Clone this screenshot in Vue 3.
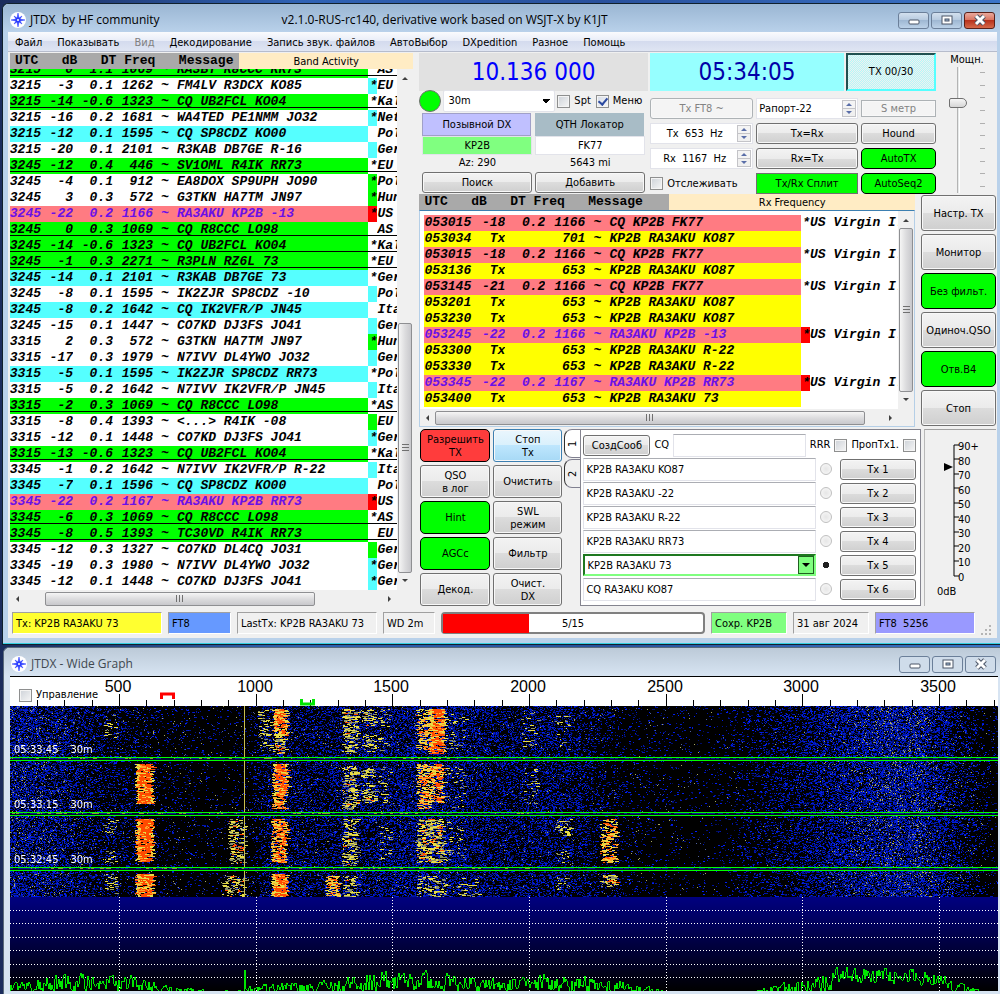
<script setup>
import { computed, onMounted, ref } from 'vue'

const menu = [
  { text: 'Файл' },
  { text: 'Показывать' },
  { text: 'Вид', off: true },
  { text: 'Декодирование' },
  { text: 'Запись звук. файлов' },
  { text: 'АвтоВыбор' },
  { text: 'DXpedition' },
  { text: 'Разное' },
  { text: 'Помощь' },
]

// kind: g = green, c = cyan, r = red, w = white; mark is the colour of the flag cell
const row = (utc, db, dt, freq, msg, kind, star, mark, dxcc) => ({ utc, db, dt, freq, msg, kind, star, mark, dxcc })
const band = [
  row('3215', '0', '1.1', '1069', 'RA3BY R8CCC RR73', 'g', '', '', 'AS'),
  row('3215', '-3', '0.1', '1262', 'FM4LV R3DCX KO85', 'w', '*', 'c', 'EU'),
  row('3215', '-14', '-0.6', '1323', 'CQ UB2FCL KO04', 'g', '*', '', 'Kal'),
  row('3215', '-16', '0.2', '1681', 'WA4TED PE1NMM JO32', 'w', '*', 'c', 'Net'),
  row('3215', '-12', '0.1', '1595', 'CQ SP8CDZ KO00', 'c', '', '', 'Pol'),
  row('3215', '-20', '0.1', '2101', 'R3KAB DB7GE R-16', 'w', '', 'c', 'Ger'),
  row('3245', '-12', '0.4', '446', 'SV1OML R4IK RR73', 'g', '*', '', 'EU'),
  row('3245', '-4', '0.1', '912', 'EA8DOX SP9UPH JO90', 'w', '*', 'g', 'Pol'),
  row('3245', '3', '0.3', '572', 'G3TKN HA7TM JN97', 'w', '*', 'g', 'Hun'),
  row('3245', '-22', '0.2', '1166', 'RA3AKU KP2B -13', 'r', '*', 'r', 'US'),
  row('3245', '0', '0.3', '1069', 'CQ R8CCC LO98', 'g', '', '', 'AS'),
  row('3245', '-14', '-0.6', '1323', 'CQ UB2FCL KO04', 'g', '*', '', 'Kal'),
  row('3245', '-1', '0.3', '2271', 'R3PLN RZ6L 73', 'g', '*', '', 'EU'),
  row('3245', '-14', '0.1', '2101', 'R3KAB DB7GE 73', 'c', '*', '', 'Ger'),
  row('3245', '-8', '0.1', '1595', 'IK2ZJR SP8CDZ -10', 'w', '', 'c', 'Pol'),
  row('3245', '-8', '0.2', '1642', 'CQ IK2VFR/P JN45', 'c', '', '', 'Ita'),
  row('3245', '-15', '0.1', '1447', 'CO7KD DJ3FS JO41', 'w', '', 'c', 'Ger'),
  row('3315', '2', '0.3', '572', 'G3TKN HA7TM JN97', 'w', '*', 'g', 'Hun'),
  row('3315', '-17', '0.3', '1979', 'N7IVV DL4YWO JO32', 'w', '', 'c', 'Ger'),
  row('3315', '-5', '0.1', '1595', 'IK2ZJR SP8CDZ RR73', 'c', '*', '', 'Pol'),
  row('3315', '-5', '0.2', '1642', 'N7IVV IK2VFR/P JN45', 'w', '', 'c', 'Ita'),
  row('3315', '-2', '0.3', '1069', 'CQ R8CCC LO98', 'g', '*', '', 'AS'),
  row('3315', '-8', '0.4', '1393', '<...> R4IK -08', 'w', '', 'g', 'EU'),
  row('3315', '-12', '0.1', '1448', 'CO7KD DJ3FS JO41', 'w', '*', 'c', 'Ger'),
  row('3315', '-13', '-0.6', '1323', 'CQ UB2FCL KO04', 'g', '*', '', 'Kal'),
  row('3345', '-1', '0.2', '1642', 'N7IVV IK2VFR/P R-22', 'w', '', 'c', 'Ita'),
  row('3345', '-7', '0.1', '1596', 'CQ SP8CDZ KO00', 'c', '', '', 'Pol'),
  row('3345', '-22', '0.2', '1167', 'RA3AKU KP2B RR73', 'r', '*', 'r', 'US'),
  row('3345', '-6', '0.3', '1069', 'CQ R8CCC LO98', 'g', '*', '', 'AS'),
  row('3345', '-8', '0.5', '1393', 'TC30VD R4IK RR73', 'g', '', '', 'EU'),
  row('3345', '-12', '0.3', '1327', 'CO7KD DL4CQ JO31', 'w', '', 'g', 'Ger'),
  row('3345', '-19', '0.3', '1980', 'N7IVV DL4YWO JO32', 'w', '*', 'c', 'Ger'),
  row('3345', '-12', '0.1', '1448', 'CO7KD DJ3FS JO41', 'w', '*', 'c', 'Ger'),
]

const US = 'US Virgin I.'
const rx = [
  row('053015', '-18', '0.2', '1166', 'CQ KP2B FK77', 'k', '*', '', US),
  row('053034', 'Tx', '', '701', 'KP2B RA3AKU KO87', 'y', '', '', ''),
  row('053015', '-18', '0.2', '1166', 'CQ KP2B FK77', 'k', '*', '', US),
  row('053136', 'Tx', '', '653', 'KP2B RA3AKU KO87', 'y', '', '', ''),
  row('053145', '-21', '0.2', '1166', 'CQ KP2B FK77', 'k', '*', '', US),
  row('053201', 'Tx', '', '653', 'KP2B RA3AKU KO87', 'y', '', '', ''),
  row('053230', 'Tx', '', '653', 'KP2B RA3AKU KO87', 'y', '', '', ''),
  row('053245', '-22', '0.2', '1166', 'RA3AKU KP2B -13', 'r', '*', 'r', US),
  row('053300', 'Tx', '', '653', 'KP2B RA3AKU R-22', 'y', '', '', ''),
  row('053330', 'Tx', '', '653', 'KP2B RA3AKU R-22', 'y', '', '', ''),
  row('053345', '-22', '0.2', '1167', 'RA3AKU KP2B RR73', 'r', '*', 'r', US),
  row('053400', 'Tx', '', '653', 'KP2B RA3AKU 73', 'y', '', '', ''),
]

const side = [
  { text: 'Настр. TX' },
  { text: 'Монитор' },
  { text: 'Без фильт.', on: true },
  { text: 'Одиноч.QSO' },
  { text: 'Отв.B4', on: true },
  { text: 'Стоп' },
]

const actions = [
  { text: 'Разрешить\nTX', cls: 'red' },
  { text: 'Стоп\nTx', cls: 'hot' },
  { text: 'QSO\nв лог' },
  { text: 'Очистить' },
  { text: 'Hint', cls: 'on' },
  { text: 'SWL\nрежим' },
  { text: 'AGCc', cls: 'on' },
  { text: 'Фильтр' },
  { text: 'Декод.' },
  { text: 'Очист.\nDX' },
]

const messages = ref([
  'KP2B RA3AKU KO87',
  'KP2B RA3AKU -22',
  'KP2B RA3AKU R-22',
  'KP2B RA3AKU RR73',
  'KP2B RA3AKU 73',
  'CQ RA3AKU KO87',
])
const nextTx = ref(5)
const menuOn = ref(true)
const power = ref(73)

const step = ref(5)
const progress = computed(() => Math.round((step.value / 15) * 100))

// ruler
const PX_PER_HZ = 0.2733
const hzToX = (hz) => 109 + (hz - 500) * PX_PER_HZ
const ticks = []
for (let hz = 200; hz <= 3700; hz += 100) {
  ticks.push({ hz, x: Math.round(hzToX(hz)), major: hz % 500 === 0 })
}
const majors = ticks.filter((t) => t.major)
const marks = ['05:33:45', '05:33:15', '05:32:45']

// small seeded generator, so the waterfall is stable between reloads
let seed = 20240831
const rnd = () => {
  seed = (seed * 1664525 + 1013904223) % 4294967296
  return seed / 4294967296
}

const lerp = (points, x) => {
  for (let i = 1; i < points.length; i++) {
    if (x <= points[i][0]) {
      const [x0, y0] = points[i - 1]
      const [x1, y1] = points[i]
      return y0 + ((y1 - y0) * (x - x0)) / (x1 - x0)
    }
  }
  return points[points.length - 1][1]
}

const noise = [
  [0, 0.5], [50, 0.42], [75, 0.25], [110, 0.17], [150, 0.08], [200, 0.05], [240, 0.07],
  [258, 0.26], [320, 0.3], [420, 0.46], [460, 0.38], [500, 0.28], [540, 0.34], [575, 0.22],
  [620, 0.07], [700, 0.03], [740, 0.12], [790, 0.28], [830, 0.46], [900, 0.6], [935, 0.36],
  [965, 0.12], [988, 0.04],
]
const specks = [
  [0, 0.08], [50, 0.05], [80, 0.01], [250, 0.01], [400, 0.02], [440, 0.02], [480, 0.01], [800, 0.003], [840, 0.05],
  [880, 0.1], [910, 0.1], [930, 0.03], [988, 0],
]
// x0, x1, y0, y1, density, share of red
const signals = [
  [127, 143, 58, 98, 0.95, 0.75], [127, 143, 113, 156, 0.95, 0.78], [127, 143, 168, 191, 0.95, 0.7],
  [264, 277, 3, 30, 0.85, 0.55], [264, 275, 30, 48, 0.5, 0.3],
  [264, 278, 58, 90, 0.88, 0.65], [264, 276, 90, 103, 0.75, 0.5],
  [263, 277, 113, 157, 0.8, 0.6], [263, 277, 168, 191, 0.95, 0.7],
  [334, 348, 3, 48, 0.55, 0.08], [334, 348, 60, 104, 0.55, 0.05], [334, 347, 113, 160, 0.55, 0.05], [334, 347, 170, 191, 0.5, 0.03],
  [353, 366, 3, 20, 0.4, 0.08], [353, 366, 28, 46, 0.4, 0.06], [353, 363, 62, 72, 0.5, 0.05], [353, 366, 77, 97, 0.5, 0.08],
  [408, 419, 3, 44, 0.62, 0.2], [420, 435, 3, 48, 0.9, 0.72],
  [408, 421, 58, 103, 0.7, 0.3], [421, 434, 58, 97, 0.72, 0.45],
  [408, 434, 113, 157, 0.6, 0.15], [408, 436, 170, 191, 0.35, 0.02],
  [220, 235, 113, 158, 0.48, 0.2], [214, 235, 169, 191, 0.45, 0.15],
  [317, 329, 169, 191, 0.75, 0.4],
  [592, 607, 113, 157, 0.62, 0.35], [592, 607, 169, 181, 0.6, 0.3],
  [249, 262, 3, 45, 0.2, 0], [370, 380, 3, 45, 0.16, 0], [370, 380, 113, 155, 0.14, 0], [370, 380, 60, 100, 0.14, 0],
  [95, 107, 8, 32, 0.18, 0], [95, 107, 113, 128, 0.25, 0], [95, 107, 145, 157, 0.2, 0], [95, 107, 168, 191, 0.2, 0],
  [513, 527, 5, 42, 0.12, 0], [513, 527, 62, 98, 0.12, 0], [547, 560, 8, 45, 0.1, 0],
  [547, 560, 113, 130, 0.3, 0], [547, 560, 145, 157, 0.25, 0], [547, 560, 170, 185, 0.2, 0],
  [436, 455, 8, 47, 0.1, 0], [436, 455, 60, 103, 0.1, 0], [436, 455, 115, 155, 0.1, 0], [436, 470, 172, 191, 0.14, 0],
]

const waterfall = ref(null)
const spectrum = ref(null)

function drawWaterfall(ctx, w, h) {
  ctx.fillStyle = '#000'
  ctx.fillRect(0, 0, w, h)
  for (let y = 0; y < h; y++) {
    for (let x = 0; x < w; x++) {
      const p = rnd()
      if (p < lerp(noise, x)) {
        const b = 90 + Math.floor(rnd() * 165)
        ctx.fillStyle = `rgb(0, ${b >> 3}, ${b})`
        ctx.fillRect(x, y, rnd() < 0.4 ? 2 : 1, 1)
      }
      if (rnd() < lerp(specks, x)) {
        ctx.fillStyle = rnd() < 0.5 ? '#a8a860' : '#50609a'
        ctx.fillRect(x, y, 1, 1)
      }
    }
  }
  for (const [x0, x1, y0, y1, density, red] of signals) {
    for (let y = y0; y < y1; y++) {
      let x = x0 + Math.floor(rnd() * 4) - 2
      const end = x1 + Math.floor(rnd() * 4) - 2
      while (x < end) {
        const len = 1 + Math.floor(rnd() * 4)
        if (rnd() < density) {
          const edge = x < x0 + 2 || x > x1 - 4
          const hot = rnd() < (edge ? red / 3 : red)
          ctx.fillStyle = hot ? '#ff4a00' : rnd() < 0.6 ? '#e6dc46' : density > 0.6 ? '#ffa028' : '#8c9068'
          ctx.fillRect(x, y, len, 1)
        }
        x += len
      }
    }
  }
  ctx.fillStyle = '#c8be50'
  ctx.fillRect(234, 0, 1, h)
  for (const y of [51, 106, 161]) {
    ctx.fillStyle = '#000830'
    ctx.fillRect(0, y, w, 4)
    for (let x = 0; x < w; x++) {
      if (rnd() < 0.3) {
        ctx.fillStyle = rnd() < 0.25 && x < 520 ? '#8c9040' : '#0a1c96'
        ctx.fillRect(x, y + 1, 3, 1)
      }
    }
    ctx.fillStyle = '#00ff00'
    ctx.fillRect(0, y, w, 1)
    ctx.fillRect(0, y + 3, w, 1)
  }
}

const floor = [
  [0, 9], [60, 17], [120, 14], [160, 7], [225, 3], [245, 8], [330, 12], [350, 18], [420, 18], [500, 13],
  [540, 16], [610, 12], [660, 3], [720, -3], [760, 7], [810, 15], [825, 22], [900, 23], [935, 15], [965, 5], [988, -2],
]

function drawSpectrum(ctx, w, h) {
  const grad = ctx.createLinearGradient(0, 0, 0, h)
  grad.addColorStop(0, '#000080')
  grad.addColorStop(1, '#000000')
  ctx.fillStyle = grad
  ctx.fillRect(0, 0, w, h)
  ctx.fillStyle = '#ffffff'
  for (const y of [13, 26, 40, 53, 67, 80]) {
    for (let x = 0; x < w; x += 3) ctx.fillRect(x, y, 1, 1)
  }
  for (const t of majors) {
    for (let y = 0; y < h; y += 3) ctx.fillRect(t.x, y, 1, 1)
  }
  // one column per bin, joined to the previous bin
  ctx.fillStyle = '#00e600'
  let prev = 0
  let level = 0
  for (let x = 0; x < w; x++) {
    const top = lerp(floor, x)
    const high = x > 820 && x < 935
    const target = high ? top * (0.2 + rnd() * 0.95) : top * rnd() * 1.5 - 4
    level = level * 0.3 + target * 0.7
    let v = Math.round(Math.max(0, level))
    if (x === 234) v = 21
    const lo = Math.min(prev, v)
    const hi = Math.max(prev, v)
    if (hi > 0) ctx.fillRect(x, h - hi, 1, Math.max(1, hi - lo))
    prev = v
  }
}

onMounted(() => {
  drawWaterfall(waterfall.value.getContext('2d'), 988, 191)
  drawSpectrum(spectrum.value.getContext('2d'), 988, 94)
})
</script>

<template>
  <div class="desktop">
    <main class="window">
      <header class="titlebar">
        <svg class="logo" viewBox="0 0 16 16" aria-hidden="true">
          <circle cx="8" cy="8" r="8" fill="#fff" />
          <path d="M8 1l1 5 3-2-2 3 5 1-5 1 2 3-3-2-1 5-1-5-3 2 2-3-5-1 5-1-2-3 3 2z" fill="#2a3cff" stroke="#2a3cff" stroke-width=".5" />
          <circle cx="8" cy="8" r="1" fill="#fff" />
        </svg>
        <h1>JTDX&nbsp; by HF community</h1>
        <span class="version">v2.1.0-RUS-rc140, derivative work based on WSJT-X by K1JT</span>
        <div class="winbtns">
          <button aria-label="Свернуть">
            <svg viewBox="0 0 12 12"><rect x="1" y="6" width="10" height="4" rx="1" fill="#fff" stroke="#4b5566" /></svg>
          </button>
          <button aria-label="Развернуть">
            <svg viewBox="0 0 12 12"><rect x="1" y="2" width="10" height="8" fill="#fff" stroke="#4b5566" /><rect x="4" y="5" width="4" height="2" fill="#9db8d6" stroke="#4b5566" /></svg>
          </button>
          <button class="close" aria-label="Закрыть">
            <svg viewBox="0 0 12 12"><path d="M2 2l8 8M10 2l-8 8" stroke="#4b5566" stroke-width="5" /><path d="M2 2l8 8M10 2l-8 8" stroke="#fff" stroke-width="3" /></svg>
          </button>
        </div>
      </header>

      <div class="client">
        <nav class="menubar">
          <button v-for="m in menu" :key="m.text" :disabled="m.off">{{ m.text }}</button>
        </nav>

        <div class="body">
          <section class="band">
            <div class="list-head">
              <pre class="band-cols">UTC   dB   DT Freq   Message</pre>
              <span>Band Activity</span>
            </div>
            <div class="list">
              <div class="clip">
                <table class="decodes">
                  <tbody>
                    <tr v-for="(r, i) in band" :key="i" :class="r.kind">
                      <td class="utc">{{ r.utc }}</td>
                      <td class="num db">{{ r.db }}</td>
                      <td class="num dt">{{ r.dt }}</td>
                      <td class="num freq">{{ r.freq }}</td>
                      <td class="tilde">~</td>
                      <td class="msg">{{ r.msg }}</td>
                      <td class="flag" :class="r.mark && 'm' + r.mark">{{ r.star }}</td>
                      <td class="dxcc">{{ r.dxcc }}</td>
                    </tr>
                  </tbody>
                </table>
              </div>
              <div class="vscroll">
                <i class="arrow up"></i>
                <div class="vtrack low"><div class="vthumb"><i class="grip-v"></i></div></div>
                <i class="arrow down"></i>
              </div>
            </div>
            <div class="hscroll">
              <i class="arrow left"></i>
              <div class="htrack inset"><div class="hthumb"><i class="grip-h"></i></div></div>
              <i class="arrow right"></i>
            </div>
          </section>

          <section class="right">
            <div class="top">
              <div class="controls">
                <div class="readouts">
                  <div class="dial">10.136 000</div>
                  <div class="clock">05:34:05</div>
                  <button class="period">TX 00/30</button>
                </div>
                <div class="tuning">
                  <div class="dx">
                    <div class="bandline">
                      <button class="lamp" aria-label="Состояние"></button>
                      <select aria-label="Диапазон"><option>30m</option></select>
                      <label><input type="checkbox" /> Spt</label>
                      <label><input v-model="menuOn" type="checkbox" /> Меню</label>
                    </div>
                    <div class="pair">
                      <label class="cap violet" for="dxcall">Позывной DX</label>
                      <label class="cap steel" for="dxgrid">QTH Локатор</label>
                      <input id="dxcall" class="call" value="KP2B" />
                      <input id="dxgrid" value="FK77" />
                      <span>Az: 290</span>
                      <span>5643 mi</span>
                      <button class="btn">Поиск</button>
                      <button class="btn">Добавить</button>
                    </div>
                  </div>
                  <div class="tune">
                    <button class="btn" disabled>Tx FT8 ~</button>
                    <div class="spin"><input aria-label="Рапорт" class="start" value="Рапорт-22" /><b><i class="arrow up"></i><i class="arrow down"></i></b></div>
                    <button class="btn flat" disabled>S метр</button>
                    <div class="spin"><input aria-label="Частота Tx" value="Tx  653  Hz" /><b><i class="arrow up"></i><i class="arrow down"></i></b></div>
                    <button class="btn">Tx=Rx</button>
                    <button class="btn">Hound</button>
                    <div class="spin"><input aria-label="Частота Rx" value="Rx  1167  Hz" /><b><i class="arrow up"></i><i class="arrow down"></i></b></div>
                    <button class="btn">Rx=Tx</button>
                    <button class="btn on">AutoTX</button>
                    <label><input type="checkbox" /> Отслеживать</label>
                    <button class="btn on square">Tx/Rx Сплит</button>
                    <button class="btn on">AutoSeq2</button>
                  </div>
                </div>
              </div>
              <div class="power">
                <label for="pwr">Мощн.</label>
                <div class="fader">
                  <input id="pwr" v-model="power" type="range" min="0" max="100" />
                  <div class="notches"><i v-for="n in 10" :key="n"></i></div>
                </div>
              </div>
            </div>

            <div class="mid">
              <section class="rx">
                <div class="list-head">
                  <pre class="rx-cols">UTC   dB   DT Freq   Message</pre>
                  <span>Rx Frequency</span>
                </div>
                <div class="rx-box">
                  <div class="list">
                    <div class="clip">
                      <table class="decodes long">
                        <tbody>
                          <tr v-for="(r, i) in rx" :key="i" :class="r.kind">
                            <td class="utc">{{ r.utc }}</td>
                            <td class="num db">{{ r.db }}</td>
                            <td class="num dt">{{ r.dt }}</td>
                            <td class="num freq">{{ r.freq }}</td>
                            <td class="tilde">~</td>
                            <td class="msg">{{ r.msg }}</td>
                            <td class="flag" :class="r.mark && 'm' + r.mark">{{ r.star }}</td>
                            <td class="dxcc">{{ r.dxcc }}</td>
                          </tr>
                        </tbody>
                      </table>
                    </div>
                    <div class="vscroll">
                      <i class="arrow up"></i>
                      <div class="vtrack"><div class="vthumb"><i class="grip-v"></i></div></div>
                      <i class="arrow down"></i>
                    </div>
                  </div>
                  <div class="hscroll">
                    <i class="arrow left"></i>
                    <div class="htrack"><div class="hthumb wide-thumb"><i class="grip-h"></i></div></div>
                    <i class="arrow right"></i>
                  </div>
                </div>
              </section>
              <aside class="side">
                <button v-for="b in side" :key="b.text" class="btn" :class="{ on: b.on }">{{ b.text }}</button>
              </aside>
            </div>

            <div class="bottom">
              <div class="actions">
                <button v-for="a in actions" :key="a.text" class="btn" :class="a.cls">{{ a.text }}</button>
              </div>
              <div class="tabs">
                <button>1</button>
                <button>2</button>
              </div>
              <section class="gen">
                <div class="genline">
                  <button class="btn">СоздСооб</button>
                  <label for="cq">CQ</label>
                  <input id="cq" type="text" />
                  <label>RRR <input type="checkbox" /></label>
                  <label>ПропTx1. <input type="checkbox" /></label>
                </div>
                <div v-for="(m, i) in messages" :key="i" class="txline">
                  <div v-if="i === 4" class="combo">
                    <input v-model="messages[i]" type="text" aria-label="Tx 5" />
                    <button aria-label="Список"><i class="arrow down"></i></button>
                  </div>
                  <input v-else v-model="messages[i]" type="text" :aria-label="'Tx ' + (i + 1)" />
                  <input v-model="nextTx" type="radio" name="next" :value="i + 1" :aria-label="'Следующее Tx ' + (i + 1)" />
                  <button class="btn">Tx {{ i + 1 }}</button>
                </div>
              </section>
              <div class="meter">
                <svg viewBox="0 0 70 176" role="img" aria-label="Уровень сигнала">
                  <path d="M34 15H29V146H34M29 29h5M29 44h5M29 58h5M29 73h5M29 87h5M29 102h5M29 116h5M29 131h5" fill="none" stroke="#000" />
                  <path d="M19 33v8l9-4z" />
                  <text v-for="n in 10" :key="n" x="33" :y="Math.round(165 - n * 14.5)">{{ (n - 1) * 10 }}{{ n === 10 ? '+' : '' }}</text>
                  <text x="12" y="165">0dB</text>
                </svg>
              </div>
            </div>
          </section>
        </div>

        <footer class="status">
          <span class="cell yellow">Tx: KP2B RA3AKU 73</span>
          <span class="cell blue">FT8</span>
          <span class="cell last">LastTx: KP2B RA3AKU 73</span>
          <span class="cell wd">WD 2m</span>
          <div class="progress">
            <div class="fill" :style="{ width: progress + '%' }"></div>
            <span>{{ step }}/15</span>
          </div>
          <span class="cell green">Сохр. KP2B</span>
          <span class="cell date">31 авг 2024</span>
          <span class="cell violet">FT8&nbsp; 5256</span>
          <svg class="resize" viewBox="0 0 10 10"><path d="M8 0h2v2H8zM4 4h2v2H4zM8 4h2v2H8zM0 8h2v2H0zM4 8h2v2H4zM8 8h2v2H8z" fill="#b4b4b4" /></svg>
        </footer>
      </div>
    </main>

    <section class="window wide">
      <header class="titlebar">
        <svg class="logo" viewBox="0 0 16 16" aria-hidden="true">
          <circle cx="8" cy="8" r="8" fill="#fff" />
          <path d="M8 1l1 5 3-2-2 3 5 1-5 1 2 3-3-2-1 5-1-5-3 2 2-3-5-1 5-1-2-3 3 2z" fill="#2a3cff" stroke="#2a3cff" stroke-width=".5" />
          <circle cx="8" cy="8" r="1" fill="#fff" />
        </svg>
        <h1>JTDX - Wide Graph</h1>
        <div class="winbtns">
          <button aria-label="Свернуть">
            <svg viewBox="0 0 12 12"><rect x="1" y="6" width="10" height="4" rx="1" fill="#fff" stroke="#4b5566" /></svg>
          </button>
          <button aria-label="Развернуть">
            <svg viewBox="0 0 12 12"><rect x="1" y="2" width="10" height="8" fill="#fff" stroke="#4b5566" /><rect x="4" y="5" width="4" height="2" fill="#9db8d6" stroke="#4b5566" /></svg>
          </button>
          <button aria-label="Закрыть">
            <svg viewBox="0 0 12 12"><path d="M2 2l8 8M10 2l-8 8" stroke="#4b5566" stroke-width="5" /><path d="M2 2l8 8M10 2l-8 8" stroke="#fff" stroke-width="3" /></svg>
          </button>
        </div>
      </header>
      <div class="graph">
        <div class="ruler">
          <svg viewBox="0 0 988 29" preserveAspectRatio="xMinYMin slice">
            <path v-for="t in ticks" :key="t.hz" :d="`M${t.x}.5 ${t.major ? 17 : 23}V29`" stroke="#000" />
            <text v-for="t in majors" :key="t.hz" :x="t.x - 1" y="15" text-anchor="middle">{{ t.hz }}</text>
            <path d="M151.500 22V17H163.500V22" fill="none" stroke="#f00" stroke-width="3" />
            <path d="M291.500 22V27H303.500V22" fill="none" stroke="#00e600" stroke-width="3" />
          </svg>
          <label><input type="checkbox" /> Управление</label>
        </div>
        <div class="falls">
          <canvas ref="waterfall" width="988" height="191"></canvas>
          <div class="stamps">
            <div v-for="m in marks" :key="m"><span>{{ m }}</span><span>30m</span></div>
          </div>
        </div>
        <canvas ref="spectrum" width="988" height="94"></canvas>
      </div>
    </section>
  </div>
</template>

<style>
body {
  margin: 0;
  background: #1d3c78;
}
</style>

<style scoped>
* {
  box-sizing: border-box;
}

.desktop {
  padding: 3px 0 0 2px;
  background: linear-gradient(90deg, #1b2c5c, #2f62b5 30%, #28509c 60%, #3b74c8);
  font: 11px/14px "DejaVu Sans Condensed", "DejaVu Sans", sans-serif;
  color: #000;
}

button,
input,
select {
  font: inherit;
  color: inherit;
  margin: 0;
  min-width: 0;
}

button {
  padding: 0;
}

.window {
  background: #b9d1ea;
  border: 1px solid #10202c;
  border-right: 0;
  border-radius: 6px 0 0 0;
  padding: 0 3px 6px 5px;
  box-shadow: inset 0 -1px 0 #35cfe0;
}

.titlebar {
  display: flex;
  align-items: center;
  height: 28px;
  margin: 0 -3px 0 -5px;
  padding: 4px 5px 0 7px;
  border-radius: 6px 0 0 0;
  background: linear-gradient(#9ab6d3, #b9d1ea);
  font: 12px/16px "Open Sans", "Noto Sans", sans-serif;
}

.titlebar h1 {
  margin: 0 0 0 4px;
  font: inherit;
}

.logo {
  width: 16px;
  height: 16px;
}

.version {
  margin-left: 122px;
}

.winbtns {
  display: flex;
  gap: 2px;
  margin-left: auto;
}

.winbtns button {
  display: flex;
  align-items: center;
  justify-content: center;
  width: 31px;
  height: 17px;
  border: 1px solid #6b7f99;
  border-radius: 3px;
  background: linear-gradient(#d3e0ee, #b4c8de 50%, #9fb8d3 50%, #bcd2e8);
}

.winbtns svg {
  width: 12px;
  height: 12px;
}

.winbtns .close {
  background: linear-gradient(#e9a99c, #d9705c 50%, #b8321c 50%, #d5694a);
  border-color: #5a2018;
}

.client {
  background: #f0f0f0;
}

.menubar {
  display: flex;
  height: 20px;
  padding: 2px 0 0 7px;
  gap: 15px;
  background: linear-gradient(#fafbfd, #e6ebf7 50%, #d4dbee 50%, #dfe5f3);
  border-bottom: 1px solid #b6bccc;
}

.menubar button {
  border: 0;
  background: none;
}

.menubar button:disabled {
  color: #808080;
}

.body {
  display: grid;
  grid-template-columns: 403fr 576fr;
  gap: 6px;
  padding: 1px 1px 0 2px;
}

.band {
  display: flex;
  flex-direction: column;
}

.list-head {
  display: flex;
  height: 16px;
  background: #ffecc4;
}

.list-head pre {
  margin: 0;
  padding-left: 5px;
  background: #a9a9a9;
  font: bold 13px/15px "Liberation Mono", monospace;
}

.band-cols {
  width: 229px;
}

.rx-cols {
  width: 250px;
}

.list-head span {
  flex: 1;
  text-align: center;
  line-height: 17px;
}

.list {
  display: flex;
  background: #fff;
}

.clip {
  flex: 1;
  min-width: 0;
  overflow: hidden;
}

.band .clip {
  display: flex;
  align-items: flex-end;
  height: 521px;
}

.decodes {
  width: 100%;
  table-layout: fixed;
  border-collapse: collapse;
  font: italic bold 13px/16px "Liberation Mono", monospace;
}

.decodes td {
  padding: 0;
  height: 16px;
  overflow: hidden;
  white-space: pre;
}

.num {
  text-align: right;
}

.utc {
  width: 31px;
}

.db {
  width: 32px;
}

.dt {
  width: 40px;
}

.freq {
  width: 40px;
}

.tilde {
  width: 24px;
  text-align: center;
}

.flag {
  width: 9px;
  text-align: right;
}

.dxcc {
  width: 20px;
}

.band .utc {
  direction: rtl;
}

.long .utc {
  width: 49px;
}

.long .dxcc {
  width: 88px;
}

.g td {
  background: linear-gradient(#000, #000) 0 13px / 100% 1px no-repeat;
}

.g td:not(.flag, .dxcc),
.mg {
  background-color: #00ff00;
}

.c td:not(.flag, .dxcc),
.mc {
  background: #55ffff;
}

.r td:not(.flag, .dxcc),
.k td:not(.flag, .dxcc) {
  background: #ff7b82;
}

.r td:not(.flag, .dxcc) {
  color: #6a10e8;
}

.y td:not(.flag, .dxcc) {
  background: #ffff00;
}

.mr {
  background: #ff0000;
}

.arrow {
  width: 0;
  height: 0;
  border: 3px solid transparent;
}

.arrow.up {
  border-top: 0;
  border-bottom-color: #404040;
}

.arrow.down {
  border-bottom: 0;
  border-top-color: #404040;
}

.arrow.left {
  border-left: 0;
  border-right-color: #404040;
}

.arrow.right {
  border-right: 0;
  border-left-color: #404040;
}

.vscroll {
  display: flex;
  flex-direction: column;
  align-items: center;
  width: 16px;
  padding: 8px 0;
  background: #f0f0f0;
}

.vtrack {
  display: flex;
  flex-direction: column;
  flex: 1;
  width: 14px;
  margin: 6px 0;
}

.vtrack.low {
  padding-top: 237px;
}

.vthumb,
.hthumb {
  display: flex;
  align-items: center;
  justify-content: center;
  border: 1px solid #8e8f92;
  border-radius: 2px;
}

.vthumb {
  flex: 1;
  background: linear-gradient(90deg, #f5f5f5, #dcdcde 50%, #c8c8cc);
}

.hthumb {
  width: 270px;
  background: linear-gradient(#f5f5f5, #dcdcde 50%, #c8c8cc);
}

.hthumb.wide-thumb {
  width: 96%;
}

.grip-v {
  width: 7px;
  height: 8px;
  background: repeating-linear-gradient(#707070 0 1px, transparent 1px 3px);
}

.grip-h {
  width: 8px;
  height: 7px;
  background: repeating-linear-gradient(90deg, #707070 0 1px, transparent 1px 3px);
}

.hscroll {
  display: flex;
  align-items: center;
  height: 17px;
  padding: 0 22px 0 6px;
  background: #f0f0f0;
}

.htrack {
  display: flex;
  flex: 1;
  height: 14px;
  margin: 0 6px;
}

.htrack.inset {
  padding-left: 20px;
}

.right {
  display: flex;
  flex-direction: column;
  min-width: 0;
}

.top {
  display: flex;
  gap: 2px;
}

.controls {
  flex: 1;
}

.readouts {
  display: grid;
  grid-template-columns: 229fr 195fr 90fr;
  gap: 2px;
  height: 36px;
}

.dial,
.clock {
  font: 24px/38px "DejaVu Sans Condensed", sans-serif;
  text-align: center;
}

.dial {
  background: #e1e1e1;
  color: #0000ff;
}

.clock {
  background: #96ffff;
  color: #0000a8;
}

.period {
  border: 2px solid #55ffff;
  border-top-color: #205050;
  border-left-color: #205050;
  background: conic-gradient(#f0f0f0 25%, #b4f8f8 0 50%, #f0f0f0 0 75%, #b4f8f8 0) 0 0 / 2px 2px;
}

.tuning {
  display: flex;
  gap: 5px;
}

.dx {
  flex: 226;
}

.bandline {
  display: flex;
  align-items: center;
  gap: 2px;
  height: 24px;
}

.lamp {
  width: 22px;
  height: 22px;
  border: 1px solid #707070;
  border-radius: 50%;
  background: #00ff00;
}

.bandline select {
  flex: 1;
  height: 22px;
  padding: 0 4px;
  appearance: none;
  border: 1px solid #e2e3ea;
  border-radius: 2px;
  background:
    conic-gradient(from -45deg at 50% 100%, #000 90deg, transparent 0) right 4px center / 8px 4px no-repeat,
    #fff;
}

label {
  display: flex;
  align-items: center;
  gap: 4px;
}

.bandline label {
  margin-right: 3px;
}

input[type='checkbox'] {
  appearance: none;
  flex: none;
  width: 13px;
  height: 13px;
  border: 1px solid #8e8f8f;
  background: linear-gradient(135deg, #cdd2d8, #f6f6f6);
  box-shadow: inset 0 0 0 1px #f4f4f4;
}

input[type='checkbox']:checked {
  background: linear-gradient(135deg, #d5dce8, #f6f6f6);
}

input[type='checkbox']:checked::before {
  content: '';
  display: block;
  width: 4px;
  height: 7px;
  margin: 0 0 0 3px;
  border: solid #2c4aa0;
  border-width: 0 2px 2px 0;
  transform: rotate(40deg);
}

.pair {
  display: grid;
  grid-template-columns: 1fr 1fr;
  grid-template-rows: 23px 20px 16px 21px;
  column-gap: 3px;
  padding-left: 3px;
  text-align: center;
}

.cap {
  justify-content: center;
  margin-right: 1px;
}

.cap.violet {
  background: #c0c0ff;
  border: 1px solid #a0a0c8;
}

.cap.steel {
  background: #a8bcc6;
}

.pair input {
  width: 100%;
  height: 19px;
  border: 1px solid #e2e3ea;
  background: #fff;
  text-align: center;
}

.pair .call {
  background: #80ff80;
}

.btn {
  border: 1px solid #707070;
  border-radius: 3px;
  background: linear-gradient(#f3f3f3, #ebebeb 50%, #dcdcdc 50%, #cfcfcf);
  box-shadow: inset 0 0 0 1px #f8f8f8;
  white-space: pre-line;
  line-height: 13px;
}

.btn:disabled {
  background: #f4f4f4;
  border-color: #adb2b5;
  color: #838383;
}

.btn.on {
  background: #00ff00;
  border-color: #000;
  border-radius: 5px;
  box-shadow: none;
}

.btn.red {
  background: #ff3c3c;
  border-color: #000;
  border-radius: 5px;
  box-shadow: none;
}

.btn.hot {
  background: linear-gradient(#eaf6fd, #d9f0fc 50%, #bee6fd 50%, #a7d9f5);
  border-color: #3c7fb1;
}

.btn.square {
  border-color: #707070;
  border-radius: 0;
}

.btn.flat {
  height: 17px;
  align-self: center;
  border-radius: 0;
}

.tune {
  flex: 286;
  display: grid;
  grid-template-columns: 103fr 102fr 75fr;
  grid-template-rows: repeat(4, 21px);
  gap: 4px 3px;
  padding-top: 9px;
}

.spin {
  display: flex;
  padding: 1px;
  background: #fff;
  border: 1px solid #e2e3ea;
}

.spin input {
  flex: 1;
  width: 0;
  padding: 0;
  border: 0;
  text-align: center;
  white-space: pre;
}

.spin .start {
  padding-left: 1px;
  text-align: left;
}

.spin b {
  display: grid;
  grid-template-rows: 1fr 1fr;
  gap: 1px;
  width: 14px;
  border: 1px solid #c4c4c8;
  background: linear-gradient(#f4f4f4 48%, #c4c4c8 48% 52%, #f0f0f0 52%);
}

.spin b i {
  justify-self: center;
  align-self: center;
}

.spin .arrow.up {
  border-bottom-color: #5a6ea8;
}

.spin .arrow.down {
  border-top-color: #5a6ea8;
}

.power {
  width: 58px;
}

.power label {
  justify-content: center;
}

.fader {
  display: flex;
  justify-content: center;
  gap: 13px;
  height: 126px;
}

.fader input {
  width: 18px;
  height: 126px;
  appearance: none;
  writing-mode: vertical-lr;
  direction: rtl;
  background: linear-gradient(90deg, transparent 8px, #b4b4b4 8px 9px, #e7eaea 9px 10px, #fff 10px 11px, transparent 11px);
}

.fader input::-webkit-slider-thumb {
  appearance: none;
  width: 18px;
  height: 10px;
  border: 1px solid #707070;
  border-radius: 2px 5px 5px 2px;
  background: linear-gradient(#f6f6f6, #d6d6d6);
}

.notches {
  display: flex;
  flex-direction: column;
  justify-content: space-between;
  width: 5px;
  padding: 5px 0 6px;
}

.notches i {
  height: 1px;
  background: #b0b0b0;
}

.mid {
  display: flex;
  gap: 6px;
}

.rx {
  flex: 1;
  min-width: 0;
}

.rx-box {
  border: 1px solid #b5cfe7;
  border-top-color: #3c7fb1;
  background: #fff;
}

.rx .list {
  height: 198px;
}

.rx .clip {
  padding: 4px 0 0 4px;
}

.side {
  display: flex;
  flex-direction: column;
  gap: 3px;
  width: 75px;
  padding-top: 1px;
}

.side .btn {
  height: 36px;
}

.bottom {
  display: flex;
  margin-top: 2px;
}

.actions {
  display: grid;
  grid-template-columns: 70px 69px;
  grid-template-rows: repeat(5, 33px);
  gap: 3px;
  padding-left: 1px;
}

.tabs {
  display: flex;
  flex-direction: column;
  gap: 1px;
  width: 16px;
  margin-left: 2px;
}

.tabs button {
  height: 29px;
  border: 1px solid #808090;
  border-left: 0;
  border-right-color: #303030;
  border-radius: 0 8px 8px 0;
  background: #fff;
  writing-mode: vertical-rl;
  transform: rotate(180deg);
}

.tabs button + button {
  background: #f0f0f0;
}

.gen {
  flex: 1;
  height: 177px;
  padding: 3px 4px 3px 2px;
  border: 1px solid #84848f;
  background: #fff;
  min-width: 0;
}

.genline {
  display: flex;
  align-items: center;
  gap: 4px;
  height: 24px;
}

.genline .btn {
  width: 67px;
  height: 21px;
}

.genline input[type='text'] {
  flex: 1;
}

input[type='text'] {
  width: 0;
  height: 23px;
  padding: 0 2px;
  border: 1px solid #e2e3ea;
  border-top-color: #abadb3;
  background: #fff;
}

.txline {
  display: flex;
  align-items: center;
  gap: 4px;
  height: 24px;
}

.txline > input[type='text'],
.combo {
  flex: 1;
}

.txline .btn {
  width: 76px;
  height: 21px;
  margin-left: 4px;
}

.combo {
  display: flex;
  height: 22px;
  border: 2px solid #80ff80;
  border-top-color: #1e7820;
  border-left-color: #1e7820;
}

.combo input[type='text'] {
  flex: 1;
  height: 18px;
  border: 0;
}

.combo button {
  display: flex;
  align-items: center;
  justify-content: center;
  width: 16px;
  border: 1px solid #206020;
  background: #80ff80;
}

.combo .arrow {
  border-width: 4px 4px 0;
  border-top-color: #000;
}

input[type='radio'] {
  appearance: none;
  width: 12px;
  height: 12px;
  border: 1px solid #c0c0c0;
  border-radius: 50%;
  background: radial-gradient(#e6e6e6, #fafafa);
}

input[type='radio']:checked {
  border-color: #fff;
  background: radial-gradient(#202020 3px, #fff 3px);
}

.meter {
  width: 72px;
  margin-left: 3px;
  border-left: 1px solid #b8b8b8;
  border-top: 1px solid #a0a0a0;
}

.meter svg {
  display: block;
  width: 70px;
  height: 176px;
}

.meter text {
  font-size: 11px;
}

.status {
  display: flex;
  align-items: center;
  height: 31px;
  padding: 4px 6px 3px 4px;
  gap: 6px;
}

.cell {
  height: 22px;
  padding: 4px 3px 0;
  border: 1px solid #a0a0a0;
  border-right-color: #fff;
  border-bottom-color: #fff;
  white-space: pre;
}

.cell.yellow {
  width: 150px;
  background: #ffff30;
}

.cell.blue {
  width: 63px;
  background: #6699ff;
}

.cell.last {
  width: 140px;
}

.cell.wd {
  width: 52px;
}

.cell.green {
  width: 76px;
  background: #80ff80;
}

.cell.date {
  width: 76px;
}

.cell.violet {
  width: 100px;
  background: #9999ff;
}

.progress {
  flex: 1;
  display: grid;
  height: 22px;
  border: 2px solid #808080;
  border-radius: 4px;
  background: #fff;
}

.progress .fill,
.progress span {
  grid-area: 1 / 1;
}

.progress .fill {
  background: #ff0000;
}

.progress span {
  text-align: center;
  line-height: 19px;
}

.resize {
  width: 10px;
  height: 10px;
  align-self: flex-end;
}

.wide {
  margin: 2px 0 0 1px;
  padding: 0 2px 3px 6px;
  background: #d7e4f2;
  border-color: #5a6a7a;
  border-bottom: 0;
  box-shadow: none;
}

.wide .titlebar {
  margin: 0 -2px 0 -6px;
  padding-right: 4px;
  background: linear-gradient(#bccad8, #d7e4f2);
  color: #404850;
}

.wide .winbtns button {
  background: #cfdcea;
}

.graph {
  border-top: 1px solid #000;
}

.ruler {
  position: relative;
  height: 29px;
  background: #fff;
}

.ruler svg {
  display: block;
  width: 100%;
  height: 29px;
}

.ruler text {
  font: 16px "Liberation Sans", sans-serif;
}

.ruler label {
  position: absolute;
  left: 9px;
  top: 11px;
}

.falls {
  position: relative;
}

canvas {
  display: block;
  width: 100%;
  image-rendering: pixelated;
}

.stamps {
  position: absolute;
  inset: 37px auto auto 4px;
  display: grid;
  grid-auto-rows: 55px;
  color: #fff;
}

.stamps div {
  display: flex;
  gap: 12px;
}
</style>
